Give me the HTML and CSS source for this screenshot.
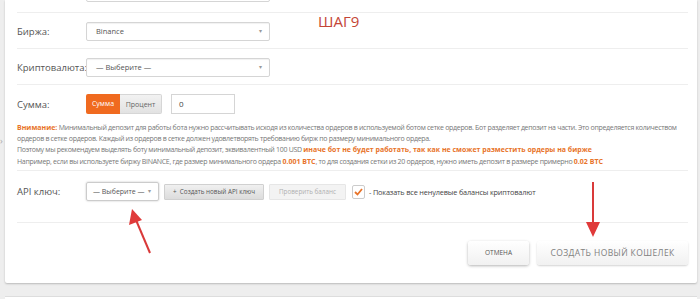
FILE: index.html
```html
<!DOCTYPE html>
<html lang="ru">
<head>
    <meta charset="UTF-8">
    <title>Создать новый кошелек</title>
    <link rel="stylesheet" href="styles.css">
</head>
<body>
    <div class="page">
        <span class="side-arrow">›</span>
        <div class="wallet-card">
            <div class="form-row top-row">
                <div class="label"></div>
                <div class="select wide"></div>
            </div>
            <div class="form-row">
                <div class="label">Биржа:</div>
                <div class="select wide">Binance<span class="caret">▾</span></div>
            </div>
            <div class="form-row">
                <div class="label">Криптовалюта:</div>
                <div class="select wide">— Выберите —<span class="caret">▾</span></div>
            </div>
            <div class="form-row amount-row">
                <div class="amount-line">
                    <div class="label">Сумма:</div>
                    <div class="toggle">
                        <span class="toggle-btn active">Сумма</span>
                        <span class="toggle-btn">Процент</span>
                    </div>
                    <div class="text-input">0</div>
                </div>
                <p class="notice">
                    <b>Внимание:</b> Минимальный депозит для работы бота нужно рассчитывать исходя из количества ордеров в используемой ботом сетке ордеров. Бот разделяет депозит на части. Это определяется количеством ордеров в сетке ордеров. Каждый из ордеров в сетке должен удовлетворять требованию бирж по размеру минимального ордера.<br>
                    Поэтому мы рекомендуем выделять боту минимальный депозит, эквивалентный 100 USD <b>иначе бот не будет работать, так как не сможет разместить ордеры на бирже</b><br>
                    Например, если вы используете биржу BINANCE, где размер минимального ордера <b>0.001 BTC</b>, то для создания сетки из 20 ордеров, нужно иметь депозит в размере примерно <b>0.02 BTC</b>
                </p>
            </div>
            <div class="form-row api-row">
                <div class="label">API ключ:</div>
                <div class="select small">— Выберите —<span class="caret">▾</span></div>
                <span class="btn-mini">+&nbsp; Создать новый API ключ</span>
                <span class="btn-mini disabled">Проверить баланс</span>
                <span class="checkbox">
                    <svg width="9" height="8" viewBox="0 0 9 8"><polyline points="1,4 3.5,6.5 8,1" fill="none" stroke="#e8742a" stroke-width="1.8"/></svg>
                </span>
                <span class="check-label">- Показать все ненулевые балансы криптовалют</span>
            </div>
            <div class="card-footer">
                <span class="btn-footer">Отмена</span>
                <span class="btn-footer big">Создать новый кошелек</span>
            </div>
        </div>
        <div class="next-card"></div>

        <span class="step">ШАГ9</span>
        <svg class="arrows" width="700" height="299" viewBox="0 0 700 299">
            <line x1="150" y1="253" x2="136" y2="220" stroke="#d93a3a" stroke-width="2"/>
            <polygon points="132,209 129,225 142,220" fill="#e03a3a"/>
            <line x1="593" y1="182" x2="593" y2="225" stroke="#d93a3a" stroke-width="2"/>
            <polygon points="586,222 600,222 593,237" fill="#e03a3a"/>
        </svg>
    </div>
</body>
</html>
```

FILE: styles.css
```css
body {
    margin: 0;
    background: #eeeeee;
    font-family: 'Open Sans', 'Liberation Sans', sans-serif;
    color: #555555;
    overflow: hidden;
}

.page {
    position: relative;
    height: 299px;
    padding: 0 3px 0 5px;
}

.side-arrow {
    position: absolute;
    left: 0;
    top: 134px;
    font-size: 9px;
    color: #aaaaaa;
}

.wallet-card {
    display: flow-root;
    background: #ffffff;
    padding: 0 9px 0 12px;
    border-radius: 0 0 2px 2px;
    box-shadow: 0 1px 2px rgba(0, 0, 0, 0.22);
    height: 283px;
    box-sizing: border-box;
}

.next-card {
    margin-top: 13px;
    height: 10px;
    background: #ffffff;
    border-top: 1px solid #dddddd;
}

.form-row {
    display: flex;
    align-items: center;
    padding: 9px 0 7px;
    border-bottom: 1px solid #eeeeee;
}

.top-row {
    margin-top: -26px;
    padding-bottom: 10px;
}

.label {
    width: 69px;
    flex-shrink: 0;
    font-size: 9.5px;
    color: #555555;
}

.select {
    position: relative;
    height: 19px;
    box-sizing: border-box;
    border: 1px solid #d5d5d5;
    border-radius: 2px;
    box-shadow: inset 0 1px 1px rgba(0, 0, 0, 0.06);
    font-size: 7.5px;
    line-height: 17px;
    padding-left: 9px;
    color: #555555;
    white-space: nowrap;
}

.select.wide {
    width: 184px;
}

.select.small {
    width: 73px;
    padding-left: 6px;
    font-size: 7px;
    box-shadow: 0 0 2px rgba(0, 0, 0, 0.25);
    border-color: #cccccc;
}

.caret {
    position: absolute;
    right: 7px;
    top: 0;
    font-size: 6px;
    color: #999999;
}

.amount-row {
    display: block;
    padding: 9px 0 5px;
}

.amount-line {
    display: flex;
    align-items: center;
}

.toggle {
    display: flex;
    height: 20px;
    width: 76px;
}

.toggle-btn {
    flex: 1;
    font-size: 7px;
    line-height: 20px;
    text-align: center;
    color: #666666;
    background: linear-gradient(#f2f2f2, #e2e2e2);
    border: 1px solid #d6d6d6;
    border-left: none;
    border-radius: 0 2px 2px 0;
    box-sizing: border-box;
}

.toggle-btn.active {
    flex: 0 0 34px;
    color: #ffffff;
    background: #f06a1f;
    border: none;
    border-radius: 2px 0 0 2px;
}

.text-input {
    margin-left: 9px;
    width: 64px;
    height: 20px;
    box-sizing: border-box;
    border: 1px solid #d5d5d5;
    font-size: 8px;
    line-height: 18px;
    padding-left: 7px;
    color: #444444;
}

.notice {
    margin: 8px 0 0;
    font-size: 7px;
    line-height: 11.2px;
    letter-spacing: -0.3px;
    color: #777777;
    height: 43px;
}

.notice b {
    color: #e8742a;
    letter-spacing: 0;
}

.api-row {
    padding: 11px 0 21px;
}

.btn-mini {
    margin-left: 5px;
    height: 14px;
    line-height: 14px;
    padding: 0 8px;
    font-size: 6.3px;
    color: #555555;
    background: linear-gradient(#f0f0f0, #dcdcdc);
    border: 1px solid #d0d0d0;
    border-radius: 1px;
    white-space: nowrap;
}

.btn-mini.disabled {
    margin-left: 5px;
    padding: 0 9px;
    color: #b0b0b0;
    background: #f3f3f3;
    border-color: #e6e6e6;
}

.checkbox {
    margin-left: 6px;
    width: 13px;
    height: 14px;
    box-sizing: border-box;
    border: 1px solid #cccccc;
    border-radius: 2px;
    display: flex;
    align-items: center;
    justify-content: center;
}

.check-label {
    margin-left: 4px;
    font-size: 7.3px;
    color: #444444;
    letter-spacing: -0.15px;
}

.card-footer {
    display: flex;
    justify-content: flex-end;
    gap: 8px;
    padding-top: 18px;
}

.btn-footer {
    width: 61px;
    height: 24px;
    line-height: 24px;
    text-align: center;
    text-transform: uppercase;
    font-size: 6.5px;
    color: #555555;
    background: linear-gradient(#ffffff, #f1f1f1);
    border-radius: 3px;
    box-shadow: 0 1px 3px rgba(0, 0, 0, 0.3);
}

.btn-footer.big {
    width: 151px;
    font-size: 8.5px;
    letter-spacing: 0.4px;
    color: #808080;
    box-shadow: 0 1px 2px rgba(0, 0, 0, 0.18);
}

.step {
    position: absolute;
    left: 318px;
    top: 11px;
    font-size: 15px;
    color: #c44536;
}

.arrows {
    position: absolute;
    left: 0;
    top: 0;
    pointer-events: none;
}
```
